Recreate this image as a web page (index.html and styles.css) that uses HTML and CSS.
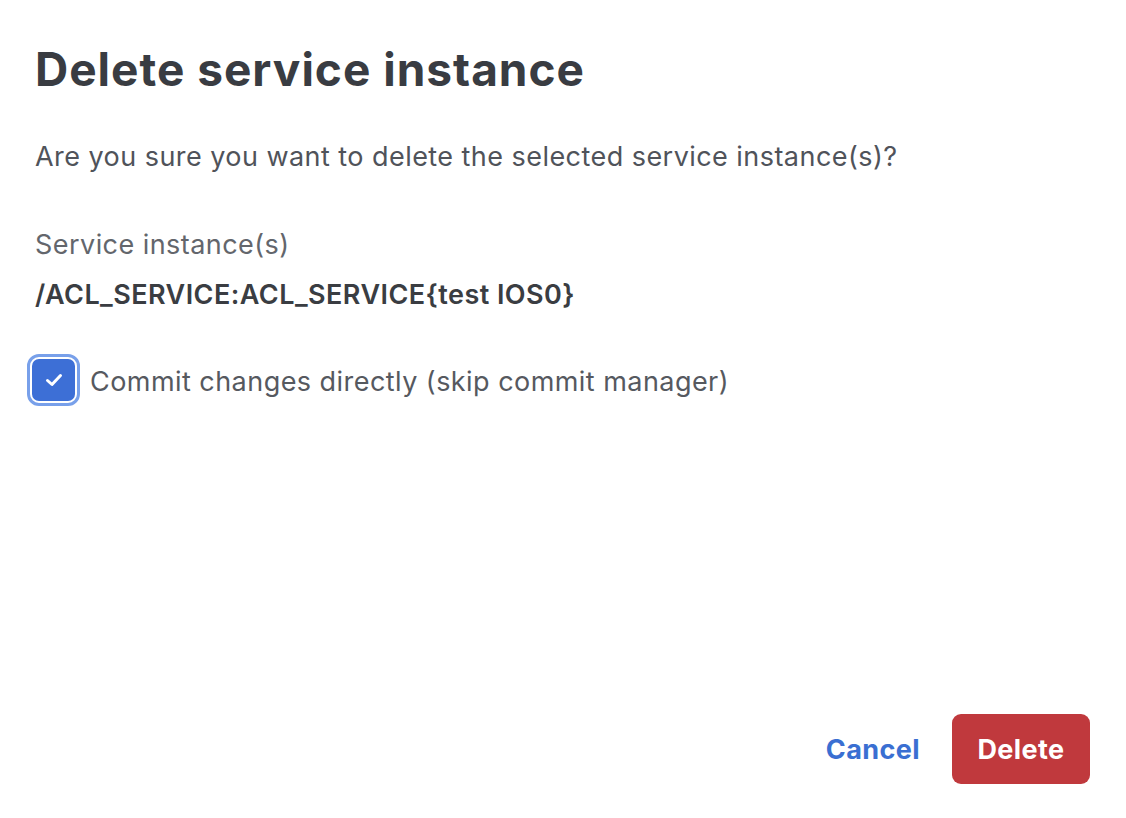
FILE: index.html
```html
<!DOCTYPE html>
<html>
<head>
<meta charset="utf-8">
<link rel="stylesheet" href="styles.css">
</head>
<body>
<div class="dialog">
  <h1 class="title">Delete service instance</h1>
  <p class="question">Are you sure you want to delete the selected service instance(s)?</p>
  <div class="label">Service instance(s)</div>
  <div class="path">/ACL_SERVICE:ACL_SERVICE{test IOS0}</div>
  <label class="check-row">
    <span class="check-ring">
      <span class="checkbox">
        <svg width="24" height="24" viewBox="0 0 24 24"><path d="M5.5 12.5 L10 16.5 L18.5 7.5" fill="none" stroke="#fff" stroke-width="3" stroke-linecap="round" stroke-linejoin="round"/></svg>
      </span>
    </span>
    <span class="check-text">Commit changes directly (skip commit manager)</span>
  </label>
  <div class="spacer"></div>
  <div class="actions">
    <button class="btn-cancel">Cancel</button>
    <button class="btn-delete">Delete</button>
  </div>
</div>
</body>
</html>
```
FILE: styles.css
```css
html, body {
  margin: 0;
  padding: 0;
  background: #ffffff;
}
body {
  font-family: Inter, "Noto Sans", sans-serif;
  width: 1126px;
  height: 818px;
  overflow: hidden;
}
.dialog {
  box-sizing: border-box;
  height: 818px;
  padding: 40px 36px 34px 35px;
  display: flex;
  flex-direction: column;
}
.title {
  margin: 0;
  font-size: 46px;
  font-weight: 700;
  color: #393c42;
  line-height: 58px;
  letter-spacing: 1px;
}
.question {
  margin: 42px 0 0 0;
  font-size: 27px;
  color: #50535a;
  line-height: 34px;
  letter-spacing: 0.45px;
}
.label {
  margin-top: 54px;
  font-size: 27px;
  color: #63666c;
  line-height: 34px;
  letter-spacing: 0.45px;
}
.path {
  margin-top: 16px;
  font-size: 27px;
  font-weight: 600;
  color: #3a3d42;
  line-height: 34px;
  letter-spacing: 0.45px;
}
.check-row {
  margin-top: 42px;
  margin-left: -8px;
  display: flex;
  align-items: center;
  gap: 10px;
}
.check-ring {
  border: 3px solid #78a0ea;
  border-radius: 12px;
  padding: 2px;
  display: flex;
}
.checkbox {
  width: 43px;
  height: 42px;
  border-radius: 7px;
  background: #3d6fd6;
  display: flex;
  align-items: center;
  justify-content: center;
}
.check-text {
  font-size: 27px;
  color: #56595f;
  line-height: 34px;
  letter-spacing: 0.45px;
  padding-top: 4px;
}
.spacer {
  flex: 1;
}
.actions {
  display: flex;
  justify-content: flex-end;
  align-items: center;
  gap: 32px;
}
button {
  font-family: Inter, "Noto Sans", sans-serif;
  font-size: 27px;
  font-weight: 700;
  letter-spacing: 0.4px;
  border: none;
  cursor: pointer;
}
.btn-cancel {
  background: none;
  color: #3a6fd2;
  padding: 0;
}
.btn-delete {
  background: #c0393d;
  color: #ffffff;
  width: 138px;
  height: 70px;
  border-radius: 9px;
}
```
